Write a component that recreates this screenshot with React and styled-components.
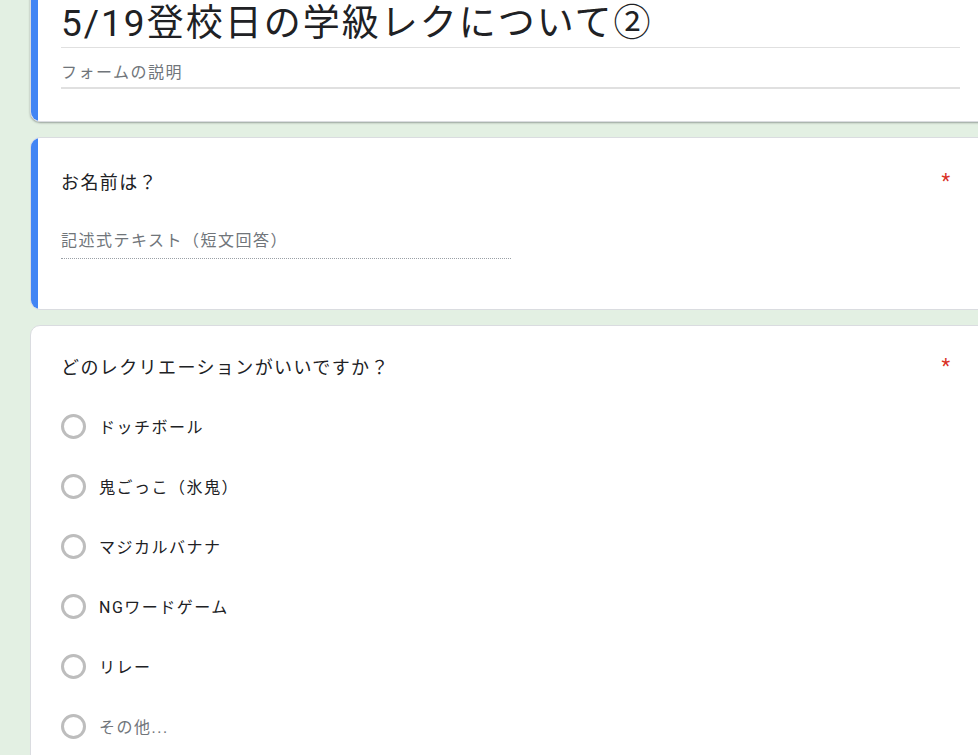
import React from 'react';
import styled, { createGlobalStyle } from 'styled-components';

const GlobalStyle = createGlobalStyle`
  html, body {
    margin: 0;
    padding: 0;
    background: #e3f0e3;
    overflow: hidden;
  }
  body {
    font-family: "Roboto", "Noto Sans CJK JP", sans-serif;
    color: #202124;
  }
`;

const Page = styled.div`
  display: flex;
  flex-direction: column;
  gap: 15px;
  padding-left: 30px;
  margin-top: -12px;
`;

const Card = styled.div`
  position: relative;
  width: 961px;
  box-sizing: border-box;
  background: #fff;
  border: 1px solid #dadce0;
  border-radius: 10px;
  padding: ${({ $pad }) => $pad || '28px 30px 50px 30px'};
  box-shadow: ${({ $raised }) =>
    $raised ? '0 1px 2px rgba(60, 64, 67, 0.45)' : 'none'};
  overflow: hidden;

  &::before {
    content: '';
    display: ${({ $active }) => ($active ? 'block' : 'none')};
    position: absolute;
    left: -1px;
    top: -1px;
    bottom: -1px;
    width: 8px;
    background: #4285f4;
  }
`;

const Title = styled.div`
  font-size: 37px;
  letter-spacing: 2px;
  line-height: 46px;
  border-bottom: 1px solid #e0e0e0;
`;

const Description = styled.div`
  margin-top: 13px;
  font-size: 16px;
  letter-spacing: 1.5px;
  line-height: 24px;
  color: #70757a;
  padding-bottom: 2px;
  border-bottom: 2px solid #e0e0e0;
`;

const QuestionRow = styled.div`
  display: flex;
  justify-content: space-between;
  align-items: flex-start;
`;

const Question = styled.div`
  font-size: 18px;
  letter-spacing: 1.4px;
  line-height: 30px;
  color: #202124;
`;

const Required = styled.span`
  color: #d93025;
  font-size: 20px;
  line-height: 26px;
  margin-right: 10px;
`;

const ShortAnswer = styled.div`
  margin-top: 31px;
  width: 450px;
  font-size: 16px;
  letter-spacing: 1.5px;
  line-height: 24px;
  color: #70757a;
  padding-bottom: 5px;
  border-bottom: 1px dotted #9aa0a6;
`;

const Options = styled.div`
  display: flex;
  flex-direction: column;
  margin-top: 13px;
`;

const Option = styled.div`
  display: flex;
  align-items: center;
  height: 60px;
  gap: 13px;
`;

const Radio = styled.span`
  width: 25px;
  height: 25px;
  box-sizing: border-box;
  border: 3px solid #bdbdbd;
  border-radius: 50%;
  flex-shrink: 0;
`;

const OptionLabel = styled.span`
  font-size: 16px;
  letter-spacing: 1.5px;
  color: ${({ $muted }) => ($muted ? '#70757a' : '#202124')};
`;

const options = ['ドッチボール', '鬼ごっこ（氷鬼）', 'マジカルバナナ', 'NGワードゲーム', 'リレー'];

export default function App() {
  return (
    <>
      <GlobalStyle />
      <Page>
        <Card $active $raised $pad="12px 30px 32px 30px">
          <Title>5/19登校日の学級レクについて②</Title>
          <Description>フォームの説明</Description>
        </Card>

        <Card $active $pad="30px 30px 50px 30px">
          <QuestionRow>
            <Question>お名前は？</Question>
            <Required>*</Required>
          </QuestionRow>
          <ShortAnswer>記述式テキスト（短文回答）</ShortAnswer>
        </Card>

        <Card $pad="27px 30px 40px 30px">
          <QuestionRow>
            <Question>どのレクリエーションがいいですか？</Question>
            <Required>*</Required>
          </QuestionRow>
          <Options>
            {options.map((o) => (
              <Option key={o}>
                <Radio />
                <OptionLabel>{o}</OptionLabel>
              </Option>
            ))}
            <Option>
              <Radio />
              <OptionLabel $muted>その他...</OptionLabel>
            </Option>
          </Options>
        </Card>
      </Page>
    </>
  );
}
